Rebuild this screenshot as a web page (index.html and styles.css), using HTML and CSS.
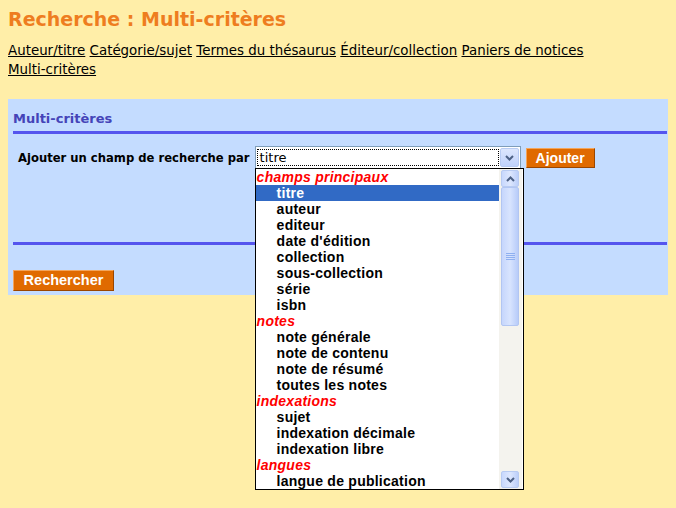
FILE: index.html
```html
<!DOCTYPE html>
<html lang="fr">
<head>
<meta charset="utf-8">
<title>Recherche : Multi-critères</title>
<link rel="stylesheet" href="styles.css">
</head>
<body>
<h1 class="title">Recherche : Multi-critères</h1>
<div class="tabs">
  <a href="#">Auteur/titre</a> <a href="#">Catégorie/sujet</a> <a href="#">Termes du thésaurus</a> <a href="#">Éditeur/collection</a> <a href="#">Paniers de notices</a> <a href="#">Multi-critères</a>
</div>
<div class="panel">
  <h3 class="panel-head">Multi-critères</h3>
  <div class="add-row">
    <span class="add-label">Ajouter un champ de recherche par</span>
    <div class="select">
      <span class="select-value">titre</span>
      <span class="select-arrow"><svg width="9" height="6" viewBox="0 0 9 6"><path d="M1 1 L4.5 4.5 L8 1" fill="none" stroke="#4d6185" stroke-width="2"/></svg></span>
      <div class="droplist">
        <ul class="options">
          <li class="group">champs principaux</li>
          <li class="opt selected">titre</li>
          <li class="opt">auteur</li>
          <li class="opt">editeur</li>
          <li class="opt">date d'édition</li>
          <li class="opt">collection</li>
          <li class="opt">sous-collection</li>
          <li class="opt">série</li>
          <li class="opt">isbn</li>
          <li class="group">notes</li>
          <li class="opt">note générale</li>
          <li class="opt">note de contenu</li>
          <li class="opt">note de résumé</li>
          <li class="opt">toutes les notes</li>
          <li class="group">indexations</li>
          <li class="opt">sujet</li>
          <li class="opt">indexation décimale</li>
          <li class="opt">indexation libre</li>
          <li class="group">langues</li>
          <li class="opt">langue de publication</li>
        </ul>
        <div class="scrollbar">
          <span class="sb-btn"><svg width="9" height="6" viewBox="0 0 9 6"><path d="M1 5 L4.5 1.5 L8 5" fill="none" stroke="#4d6185" stroke-width="2"/></svg></span>
          <span class="sb-thumb"><svg width="9" height="8" viewBox="0 0 9 8"><path d="M0 0.5H9M0 2.5H9M0 4.5H9M0 6.5H9" stroke="#8fb0f0" stroke-width="1"/></svg></span>
          <span class="sb-track"></span>
          <span class="sb-btn"><svg width="9" height="6" viewBox="0 0 9 6"><path d="M1 1 L4.5 4.5 L8 1" fill="none" stroke="#4d6185" stroke-width="2"/></svg></span>
        </div>
      </div>
    </div>
    <button class="btn btn-add" type="button">Ajouter</button>
  </div>
  <div class="separator"></div>
  <button class="btn btn-search" type="button">Rechercher</button>
</div>
</body>
</html>
```

FILE: styles.css
```css
html {
  margin: 0;
  padding: 0;
  background: #ffeea8;
}
body {
  margin: 8px;
  min-height: 492px;
  background: #ffeea8;
  font-family: "DejaVu Sans", Verdana, sans-serif;
  color: #000;
}
.title {
  margin: 0;
  font-size: 19px;
  line-height: 22px;
  font-weight: bold;
  color: #ee7d1f;
}
.tabs {
  margin-top: 11px;
  max-width: 590px;
  font-size: 13.4px;
  line-height: 19px;
}
.tabs a {
  color: #000;
  text-decoration: underline;
  white-space: nowrap;
}
.panel {
  margin-top: 20px;
  margin-right: -4px;
  background: #c4dcff;
  padding: 12px 0 4px 0;
}
.panel-head {
  margin: 0 5px;
  padding-bottom: 4px;
  font-size: 13px;
  line-height: 16px;
  font-weight: bold;
  color: #4444b8;
  border-bottom: 3px solid #5555ee;
}
.add-row {
  display: flex;
  align-items: center;
  margin-top: 12px;
  padding-left: 10px;
}
.add-label {
  font-size: 11.6px;
  font-weight: bold;
  margin-right: 5px;
}
.select {
  position: relative;
  width: 266px;
  height: 23px;
  box-sizing: border-box;
  border: 1px solid #7f9db9;
  background: #fff;
  display: flex;
  align-items: center;
  padding: 1px;
}
.select-value {
  flex: 1;
  height: 17px;
  margin-right: 1px;
  outline: 1px dotted #000;
  outline-offset: -1px;
  font-size: 13px;
  line-height: 17px;
  padding-left: 3px;
}
.select-arrow {
  width: 19px;
  height: 19px;
  box-sizing: border-box;
  border: 1px solid #b8cbf2;
  border-radius: 2px;
  background: linear-gradient(#dce6fd, #c0d2fb);
  display: flex;
  align-items: center;
  justify-content: center;
}
.droplist {
  position: absolute;
  left: -1px;
  top: 100%;
  width: 269px;
  box-sizing: border-box;
  border: 1px solid #000;
  background: #fff;
  display: flex;
  z-index: 5;
}
.options {
  list-style: none;
  margin: 0;
  padding: 0;
  width: 243px;
  font-family: "Liberation Sans", Arial, sans-serif;
  font-size: 14px;
  font-weight: bold;
  line-height: 16px;
  letter-spacing: 0.25px;
}
.options li {
  height: 16px;
  white-space: nowrap;
}
.group {
  font-style: italic;
  color: #ff0000;
  padding-left: 1px;
}
.opt {
  padding-left: 21px;
  color: #000;
}
.opt.selected {
  background: #316ac5;
  color: #fff;
}
.scrollbar {
  width: 23px;
  display: flex;
  flex-direction: column;
  align-items: center;
  background: #f4f3ee;
  padding: 1px 2px 1px 2px;
  box-sizing: border-box;
}
.sb-btn {
  width: 18px;
  height: 17px;
  flex: none;
  box-sizing: border-box;
  border: 1px solid #b8cbf2;
  border-radius: 2px;
  background: linear-gradient(90deg, #c8d8fd, #dde7fe 50%, #bccffa);
  display: flex;
  align-items: center;
  justify-content: center;
}
.sb-thumb {
  width: 18px;
  height: 139px;
  flex: none;
  box-sizing: border-box;
  border: 1px solid #b2c6f2;
  border-radius: 2px;
  background: linear-gradient(90deg, #c6d6fc, #d8e4fe 50%, #b8ccf9);
  display: flex;
  align-items: center;
  justify-content: center;
}
.sb-track {
  flex: 1;
}
.btn {
  font-family: "Liberation Sans", Arial, sans-serif;
  font-weight: bold;
  color: #fff;
  background: #e06a00;
  border: 1px solid;
  border-color: #f3a55c #9a4600 #9a4600 #f3a55c;
  padding: 0;
  box-sizing: border-box;
}
.btn-add {
  margin-left: 5px;
  width: 69px;
  height: 20px;
  font-size: 14px;
  line-height: 18px;
}
.separator {
  margin: 73px 5px 0 5px;
  border-top: 3px solid #5555ee;
}
.btn-search {
  display: block;
  margin: 25px 0 0 5px;
  width: 101px;
  height: 21px;
  font-size: 14.5px;
  line-height: 19px;
}
```
